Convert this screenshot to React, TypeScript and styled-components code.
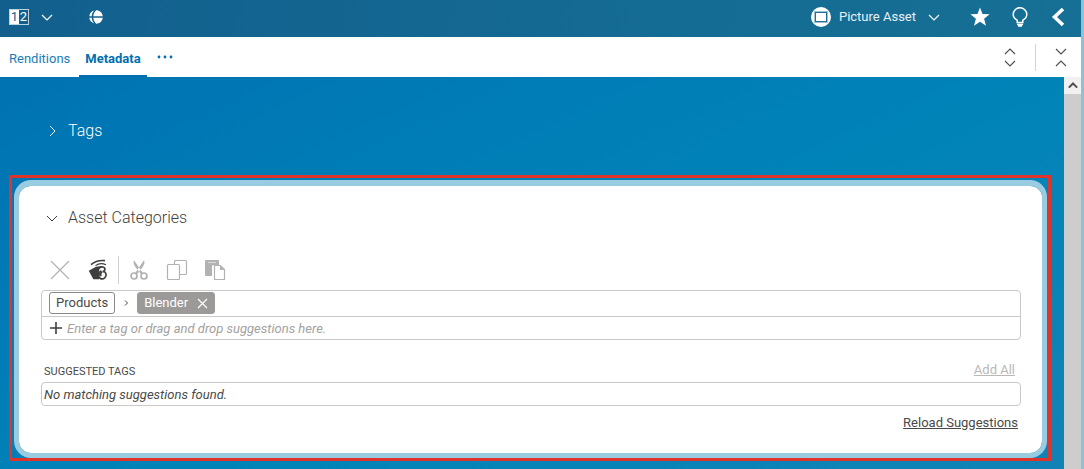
import React from 'react';
import styled, { createGlobalStyle, css } from 'styled-components';

const GlobalStyle = createGlobalStyle`
  *, *::before, *::after { box-sizing: border-box; }
  html, body { margin: 0; }
  body {
    font-family: Roboto, "Liberation Sans", sans-serif;
    font-size: 13px;
    line-height: 16px;
    color: #4a4948;
  }
  button, input { font: inherit; color: inherit; }
  svg { display: block; flex: none; }
`;

const Shell = styled.div`
  display: flex;
  flex-direction: column;
  min-height: 100vh;
  border-right: 3px solid #8ec1d8;
`;

const Header = styled.header`
  display: flex;
  align-items: center;
  height: 37px;
  padding: 0 15px 4px 9px;
  color: #fff;
  background: linear-gradient(100deg, #125f8d, #146b93 60%, #166f95);
`;

const PlainButton = styled.button`
  display: flex;
  align-items: center;
  flex: none;
  padding: 0;
  border: 0;
  background: none;
  cursor: pointer;
`;

const VersionButton = styled(PlainButton)`
  gap: 12px;
`;

const VersionBadge = styled.span`
  display: flex;
  border: 1px solid #b9d3e0;
`;

const VersionDigit = styled.span<{ $active?: boolean }>`
  width: 9px;
  font-size: 13px;
  line-height: 14px;
  text-align: center;
  color: ${p => (p.$active ? '#125f8d' : '#fff')};
  background: ${p => (p.$active ? '#fff' : 'transparent')};
`;

const LanguageButton = styled(PlainButton)`
  margin-left: 36px;
`;

const HeaderActions = styled.div`
  display: flex;
  align-items: center;
  margin-left: auto;
  gap: 20px;
`;

const TypeButton = styled(PlainButton)`
  gap: 8px;
  padding-top: 1px;
  margin-right: 10px;
`;

const TypeName = styled.span`
  margin-right: 4px;
  color: #e6f0f5;
`;

const TabBar = styled.nav`
  display: flex;
  align-items: stretch;
  height: 40px;
  padding: 0 14px 0 3px;
  background: #fff;
`;

const Tab = styled.a<{ $active?: boolean }>`
  display: flex;
  align-items: center;
  padding: 5px 6px 0;
  margin-right: 3px;
  color: #1a7db8;
  text-decoration: none;
  border-bottom: 2px solid transparent;
  ${p => p.$active && css`
    font-weight: 700;
    color: #006fb0;
    border-bottom-color: #006fb0;
  `}
`;

const MoreButton = styled(PlainButton)`
  padding-left: 7px;
  color: #006fb0;
`;

const TabTools = styled.div`
  display: flex;
  align-items: center;
  margin-left: auto;
`;

const Separator = styled.span<{ $gap: number }>`
  width: 1px;
  height: 27px;
  margin: 0 ${p => p.$gap}px;
  background: #d3d3d3;
`;

const Body = styled.div`
  display: flex;
  flex: 1;
  background: linear-gradient(155deg, #0073b3, #0084b8 55%, #1282b5);
`;

const Content = styled.main`
  flex: 1;
  min-width: 0;
  padding: 43px 13px 8px 9px;
`;

const ScrollTrack = styled.div`
  width: 17px;
  flex: none;
  background: #cdcdcd;
`;

const ScrollUp = styled(PlainButton)`
  justify-content: center;
  width: 17px;
  height: 17px;
  color: #505050;
  background: #f1f1f1;
`;

const SectionTitle = styled.h2<{ $light?: boolean }>`
  display: flex;
  align-items: center;
  gap: 10px;
  margin: 0;
  font-size: 16px;
  line-height: 22px;
  font-weight: 300;
  color: ${p => (p.$light ? '#fff' : '#3f3e3d')};
`;

const TagsSection = styled.section`
  padding: 0 37px;
  margin-bottom: 33px;
`;

const Highlight = styled.div`
  padding: 2px 1px 0 2px;
  border: 3px solid #e0342b;
`;

const Card = styled.section`
  padding: 21px 21px 22px 22px;
  background: #fff;
  background-clip: padding-box;
  border: 5px solid #9acce1;
  border-top-width: 6px;
  border-radius: 17px;
`;

const CardHeading = styled.div`
  padding-left: 5px;
`;

const Toolbar = styled.div`
  display: flex;
  align-items: center;
  gap: 16px;
  height: 28px;
  margin: 27px 0 6px;
  padding-left: 8px;
`;

const ToolButton = styled(PlainButton)<{ $enabled?: boolean }>`
  justify-content: center;
  width: 22px;
  height: 22px;
  color: ${p => (p.$enabled ? '#3f3e3d' : '#b3b2b1')};
`;

const ToolDivider = styled.span`
  width: 1px;
  height: 28px;
  margin: 0 -7px;
  background: #d0cfcf;
`;

const FieldBox = styled.div`
  border: 1px solid #cac9c8;
  border-radius: 4px;
`;

const TagRow = styled.div`
  display: flex;
  align-items: center;
  height: 26px;
  padding: 0 7px 1px;
  border-bottom: 1px solid #cac9c8;
`;

const Tag = styled.span<{ $filled?: boolean }>`
  display: flex;
  align-items: center;
  gap: 9px;
  height: 22px;
  padding: 0 6px;
  border: 1px solid ${p => (p.$filled ? '#9c9a99' : '#8b8988')};
  border-radius: 3px;
  color: ${p => (p.$filled ? '#fff' : '#4a4948')};
  background: ${p => (p.$filled ? '#9c9a99' : '#fff')};
`;

const TagArrow = styled.span`
  display: flex;
  justify-content: center;
  width: 22px;
`;

const EntryRow = styled.label`
  display: flex;
  align-items: center;
  gap: 5px;
  height: 22px;
  padding: 0 8px;
`;

const TagInput = styled.input`
  flex: 1;
  min-width: 0;
  padding: 2px 0 0;
  border: 0;
  outline: 0;
  background: none;
  &::placeholder {
    font-style: italic;
    color: #a3a1a0;
    opacity: 1;
  }
`;

const SuggestHeader = styled.div`
  display: flex;
  align-items: flex-start;
  justify-content: space-between;
  margin-top: 22px;
  padding: 0 6px 3px 3px;
`;

const SuggestTitle = styled.h3`
  margin: 0;
  padding-top: 3px;
  font-size: 11px;
  line-height: 14px;
  font-weight: 400;
`;

const TextButton = styled(PlainButton)`
  text-decoration: underline;
  &:disabled { color: #b9b8b7; cursor: default; }
`;

const EmptyMessage = styled(FieldBox)`
  padding: 4px 2px 2px;
  height: 24px;
  font-style: italic;
`;

const SuggestFooter = styled.div`
  display: flex;
  justify-content: flex-end;
  padding: 9px 3px 0;
`;

type ChevronProps = { dir: 'up' | 'down' | 'right'; size?: number; stroke?: number };

const chevronPaths = {
  up: 'M1 8 6 3 11 8',
  down: 'M1 4 6 9 11 4',
  right: 'M4 1 9 6 4 11',
};

function Chevron({ dir, size = 12, stroke = 1 }: ChevronProps) {
  return (
    <svg width={size} height={size} viewBox="0 0 12 12" fill="none" stroke="currentColor" strokeWidth={stroke} aria-hidden="true">
      <path d={chevronPaths[dir]} />
    </svg>
  );
}

const GlobeIcon = () => (
  <svg width="14" height="14" viewBox="0 0 14 14" fill="#fff" aria-hidden="true">
    <path d="M4.300 6.200C4.500 3.800 5.600 1.600 7.200.3 10.800.3 13.400 2.800 13.700 6.200ZM4.300 7.800H13.700C13.400 11.200 10.800 13.700 7.200 13.700 5.600 12.400 4.500 10.200 4.300 7.800Z" />
    <path d="M5.300.600C3.700 2.100 2.900 4.100 2.700 6.200H.3C.5 3.500 2.500 1.300 5.300.6ZM.3 7.800H2.700C2.900 9.900 3.700 11.900 5.300 13.400 2.500 12.700.5 10.500.3 7.800Z" />
  </svg>
);

const PictureIcon = () => (
  <svg width="20" height="20" viewBox="0 0 20 20" fill="none" aria-hidden="true">
    <circle cx="10" cy="10" r="10" fill="#fff" />
    <rect x="3.500" y="4.500" width="13" height="11" stroke="#9cc2d3" />
    <rect x="4.500" y="5.500" width="11" height="9" stroke="#1d6f96" />
  </svg>
);

const StarIcon = () => (
  <svg width="20" height="20" viewBox="0 0 20 20" fill="#fff" aria-hidden="true">
    <path d="M10 .5 12.500 7 19.600 7.300 14.100 11.700 16 18.700 10 14.700 4 18.700 5.900 11.700.4 7.300 7.500 7Z" />
  </svg>
);

const BulbIcon = () => (
  <svg width="20" height="20" viewBox="0 0 20 20" fill="none" stroke="#fff" strokeWidth="1.500" aria-hidden="true">
    <path d="M7.200 15.500V13.200C4.700 11.800 3.200 9.900 3.200 7.500A6.800 6.800 0 0 1 16.800 7.500C16.800 9.900 15.300 11.800 12.800 13.200V15.500ZM7 17.500H13M8 19.100H12" />
  </svg>
);

const BackIcon = () => (
  <svg width="16" height="20" viewBox="0 0 16 20" fill="none" stroke="#fff" strokeWidth="3.600" aria-hidden="true">
    <path d="M13 2 4.500 10 13 18" />
  </svg>
);

const ExpandIcon = ({ collapse }: { collapse?: boolean }) => (
  <svg width="12" height="20" viewBox="0 0 12 20" fill="none" stroke="#4f4e4d" strokeWidth="1.100" aria-hidden="true">
    <path d={collapse ? 'M1 2 6 7 11 2M1 19 6 14 11 19' : 'M1 7 6 2 11 7M1 14 6 19 11 14'} />
  </svg>
);

const DotsIcon = () => (
  <svg width="16" height="4" viewBox="0 0 16 4" fill="currentColor" aria-hidden="true">
    <circle cx="2" cy="2" r="1.400" />
    <circle cx="8" cy="2" r="1.400" />
    <circle cx="14" cy="2" r="1.400" />
  </svg>
);

const RemoveIcon = () => (
  <svg width="22" height="22" viewBox="0 0 22 22" fill="none" stroke="currentColor" strokeWidth="1.200" aria-hidden="true">
    <path d="M2 2 20 20M20 2 2 20" />
  </svg>
);

const OpenTagIcon = () => (
  <svg width="22" height="22" viewBox="0 0 22 22" fill="none" stroke="currentColor" aria-hidden="true">
    <path d="M4 5.600C8 2.200 12 1 18 1.600" strokeWidth="1.600" />
    <path d="M8.500 6.600C11.500 4.400 15 3.900 19 5.800" strokeWidth="1.100" />
    <path d="M1.800 11.800 9 7.800 15 7 12 14.500 12 20.300 6.300 20.300Z" fill="currentColor" stroke="none" />
    <path d="M11.300 12.300C10.600 9.800 13.200 7.700 15.800 8 18.600 8.500 18.700 11.600 15.600 12.800 19.200 12.200 20.200 16.400 17.700 18.800 15.200 21 11.400 19.500 11.800 16.400 12 14.800 13.300 13.800 14 11.600" fill="#fff" strokeWidth="1.700" />
    <path d="M14.800 12.800C13.600 14.300 13.400 16.300 14.200 17.300" strokeWidth="1.400" />
  </svg>
);

const CutIcon = () => (
  <svg width="22" height="22" viewBox="0 0 22 22" fill="none" stroke="currentColor" aria-hidden="true">
    <circle cx="6" cy="17" r="3" strokeWidth="1.700" />
    <circle cx="16" cy="17" r="3" strokeWidth="1.700" />
    <path d="M6 1.200C4.800 3.500 6 6 7.500 8.200L13.200 15.600 15 14.200ZM16 1.200C17.200 3.500 16 6 14.500 8.200L8.800 15.600 7 14.200Z" fill="currentColor" stroke="none" />
  </svg>
);

const CopyIcon = () => (
  <svg width="22" height="22" viewBox="0 0 22 22" fill="none" stroke="currentColor" strokeWidth="1.200" aria-hidden="true">
    <path d="M8.500 5.500V2.500A1 1 0 0 1 9.500 1.500H19.500A1 1 0 0 1 20.500 2.500V14.500A1 1 0 0 1 19.500 15.500H13.500" />
    <rect x="1.500" y="5.500" width="12" height="15" rx="1" />
  </svg>
);

const PasteIcon = () => (
  <svg width="22" height="22" viewBox="0 0 22 22" fill="currentColor" aria-hidden="true">
    <path d="M2 1H14A1 1 0 0 1 15 2V6H9.500A1.500 1.500 0 0 0 8 7.500V17H2A1 1 0 0 1 1 16V2A1 1 0 0 1 2 1Z" />
    <path d="M4 3.500H12" stroke="#dcdbdb" />
    <path d="M10.500 6.500H16.500L20.500 10.500V20.500H10.500Z" fill="#fff" stroke="currentColor" strokeWidth="1.200" />
    <path d="M16 6.500V11H20.500Z" />
  </svg>
);

const CloseIcon = () => (
  <svg width="11" height="11" viewBox="0 0 11 11" fill="none" stroke="#fff" strokeWidth="1.200" aria-hidden="true">
    <path d="M1 1 10 10M10 1 1 10" />
  </svg>
);

const PlusIcon = () => (
  <svg width="12" height="12" viewBox="0 0 12 12" fill="none" stroke="#3f3e3d" strokeWidth="1.600" aria-hidden="true">
    <path d="M6 0V12M0 6H12" />
  </svg>
);

export default function App() {
  return (
    <>
      <GlobalStyle />
      <Shell>
        <Header>
          <VersionButton aria-label="Versions">
            <VersionBadge>
              <VersionDigit $active>1</VersionDigit>
              <VersionDigit>2</VersionDigit>
            </VersionBadge>
            <Chevron dir="down" stroke={1.2} />
          </VersionButton>
          <LanguageButton aria-label="Language"><GlobeIcon /></LanguageButton>
          <HeaderActions>
            <TypeButton>
              <PictureIcon />
              <TypeName>Picture Asset</TypeName>
              <Chevron dir="down" stroke={1.2} />
            </TypeButton>
            <PlainButton aria-label="Bookmark"><StarIcon /></PlainButton>
            <PlainButton aria-label="Hints"><BulbIcon /></PlainButton>
            <PlainButton aria-label="Back"><BackIcon /></PlainButton>
          </HeaderActions>
        </Header>

        <TabBar>
          <Tab href="#renditions">Renditions</Tab>
          <Tab href="#metadata" $active>Metadata</Tab>
          <MoreButton aria-label="More tabs"><DotsIcon /></MoreButton>
          <TabTools>
            <PlainButton aria-label="Expand all"><ExpandIcon /></PlainButton>
            <Separator $gap={19} />
            <PlainButton aria-label="Collapse all"><ExpandIcon collapse /></PlainButton>
          </TabTools>
        </TabBar>

        <Body>
          <Content>
            <TagsSection>
              <SectionTitle $light><Chevron dir="right" />Tags</SectionTitle>
            </TagsSection>

            <Highlight>
              <Card>
                <CardHeading>
                  <SectionTitle><Chevron dir="down" />Asset Categories</SectionTitle>
                </CardHeading>

                <Toolbar>
                  <ToolButton aria-label="Remove" disabled><RemoveIcon /></ToolButton>
                  <ToolButton aria-label="Open in tab" $enabled><OpenTagIcon /></ToolButton>
                  <ToolDivider />
                  <ToolButton aria-label="Cut" disabled><CutIcon /></ToolButton>
                  <ToolButton aria-label="Copy" disabled><CopyIcon /></ToolButton>
                  <ToolButton aria-label="Paste" disabled><PasteIcon /></ToolButton>
                </Toolbar>

                <FieldBox>
                  <TagRow>
                    <Tag>Products</Tag>
                    <TagArrow><Chevron dir="right" size={6} stroke={2} /></TagArrow>
                    <Tag $filled>
                      Blender
                      <PlainButton aria-label="Remove Blender"><CloseIcon /></PlainButton>
                    </Tag>
                  </TagRow>
                  <EntryRow>
                    <PlusIcon />
                    <TagInput aria-label="Add tag" placeholder="Enter a tag or drag and drop suggestions here." />
                  </EntryRow>
                </FieldBox>

                <SuggestHeader>
                  <SuggestTitle>SUGGESTED TAGS</SuggestTitle>
                  <TextButton disabled>Add All</TextButton>
                </SuggestHeader>
                <EmptyMessage>No matching suggestions found.</EmptyMessage>
                <SuggestFooter>
                  <TextButton>Reload Suggestions</TextButton>
                </SuggestFooter>
              </Card>
            </Highlight>
          </Content>
          <ScrollTrack>
            <ScrollUp aria-label="Scroll up"><Chevron dir="up" size={10} stroke={2.4} /></ScrollUp>
          </ScrollTrack>
        </Body>
      </Shell>
    </>
  );
}
